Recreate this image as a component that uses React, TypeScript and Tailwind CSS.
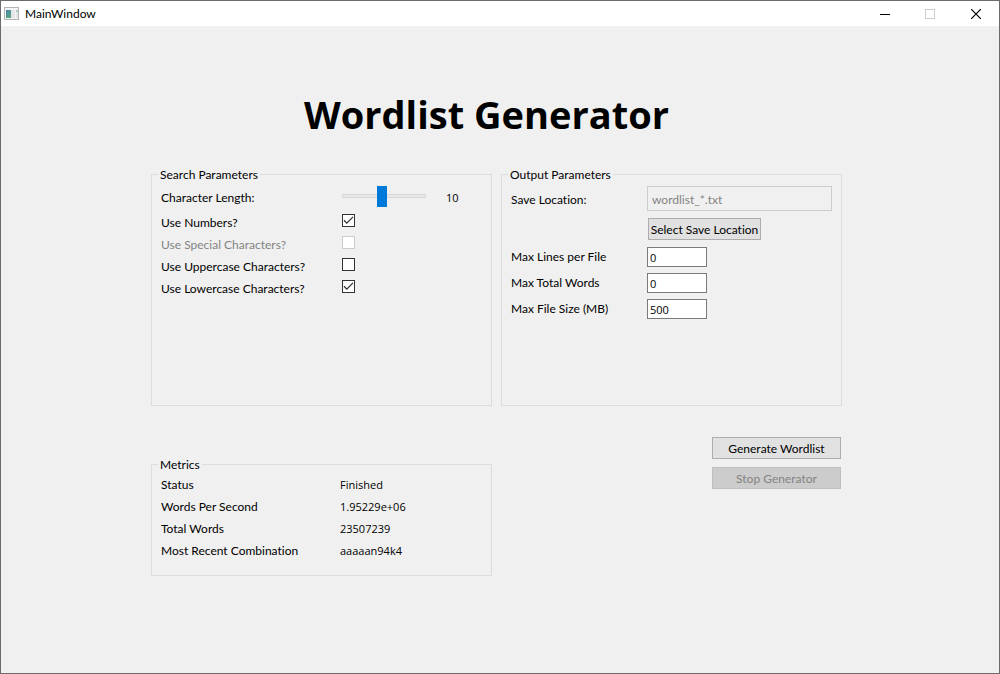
import { useState, type ReactNode } from "react";

function AppIcon() {
  return (
    <svg className="block" width="15" height="13" viewBox="0 0 15 13" aria-hidden="true" shapeRendering="crispEdges">
      <defs>
        <linearGradient id="pane" x1="0" y1="0" x2="0.6" y2="1">
          <stop offset="0" stopColor="#4a7fb0" />
          <stop offset="1" stopColor="#55a880" />
        </linearGradient>
      </defs>
      <rect x="0.5" y="0.5" width="14" height="12" fill="#f4f4f4" stroke="#b0b4b6" />
      <rect x="2" y="3" width="5" height="8" fill="url(#pane)" />
      <rect x="7" y="3" width="4" height="8" fill="#e3e5e7" />
      <rect x="12" y="3" width="2" height="2" fill="#a5cdbf" />
      <rect x="12" y="5" width="2" height="6" fill="#e3e7ea" />
    </svg>
  );
}

function TitleBar() {
  return (
    <header className="flex h-[25px] items-center bg-white pl-[3px]">
      <AppIcon />
      <span className="ml-[6px] grow">MainWindow</span>
      <div className="mr-px flex h-full">
        <button type="button" aria-label="Minimize" className="flex h-full w-[45px] items-center justify-center">
          <svg width="10" height="10" viewBox="0 0 10 10" shapeRendering="crispEdges">
            <path d="M0 5.5H10" stroke="#000" />
          </svg>
        </button>
        <button type="button" disabled aria-label="Maximize" className="flex h-full w-[45px] items-center justify-center">
          <svg width="10" height="10" viewBox="0 0 10 10" shapeRendering="crispEdges">
            <rect x="0.5" y="0.5" width="9" height="9" fill="none" stroke="#ccc" />
          </svg>
        </button>
      </div>
      <button type="button" aria-label="Close" className="flex h-full w-[46px] items-center justify-center">
        <svg width="10" height="10" viewBox="0 0 10 10">
          <path d="M0 0L10 10M10 0L0 10" stroke="#000" strokeWidth="1.2" />
        </svg>
      </button>
    </header>
  );
}

function Group({ title, children }: { title: string; children: ReactNode }) {
  return (
    <fieldset className="min-w-0 border border-[#dcdcdc] px-[9px]">
      <legend className="-ml-[3px] h-[17px] px-[2px] leading-[17px]">{title}</legend>
      {children}
    </fieldset>
  );
}

function CheckRow({ id, label, checked = false, disabled = false }: { id: string; label: string; checked?: boolean; disabled?: boolean }) {
  return (
    <div className="grid h-[22px] grid-cols-[181px_1fr]">
      <label htmlFor={id} className={disabled ? "leading-[22px] text-[#838383]" : "leading-[22px]"}>
        {label}
      </label>
      <span className="grid justify-items-start pt-[2px]">
        <input
          id={id}
          type="checkbox"
          defaultChecked={checked}
          disabled={disabled}
          className="peer col-start-1 row-start-1 size-[13px] appearance-none border border-[#333] bg-white disabled:border-[#ccc]"
        />
        <svg className="pointer-events-none invisible col-start-1 row-start-1 peer-checked:visible" width="13" height="13" viewBox="0 0 13 13">
          <path d="M2 6.3L4.8 9.1L11 2.9" fill="none" stroke="#333" strokeWidth="1.3" />
        </svg>
      </span>
    </div>
  );
}

function LimitRow({ id, label, value }: { id: string; label: string; value: string }) {
  return (
    <div className="grid grid-cols-[136px_60px] items-center">
      <label htmlFor={id}>{label}</label>
      <input
        id={id}
        type="text"
        defaultValue={value}
        className="h-5 w-full border border-[#7a7a7a] bg-white px-[2px] font-['Open_Sans','Noto_Sans',sans-serif] text-[11px]"
      />
    </div>
  );
}

const metrics = [
  ["Status", "Finished"],
  ["Words Per Second", "1.95229e+06"],
  ["Total Words", "23507239"],
  ["Most Recent Combination", "aaaaan94k4"],
];

export default function App() {
  const [length, setLength] = useState(10);

  return (
    <div className="flex min-h-screen flex-col border border-[#6b6b6b] bg-[#f0f0f0] font-['Lato','Open_Sans',sans-serif] text-[12px] leading-[16px] text-black [font-variant-ligatures:none]">
      <TitleBar />
      <main className="pt-[60px] pr-[157px] pb-10 pl-[150px]">
        <h1 className="pr-5 text-center font-['Open_Sans','Noto_Sans',sans-serif] text-[38px] leading-[56px] font-bold">Wordlist Generator</h1>

        <div className="mt-6 grid min-h-[240px] grid-cols-2 gap-[9px]">
          <Group title="Search Parameters">
            <div className="grid h-[29px] grid-cols-[181px_84px_1fr]">
              <label htmlFor="length" className="leading-[30px]">Character Length:</label>
              <input
                id="length"
                type="range"
                min={1}
                max={20}
                value={length}
                onChange={(e) => setLength(Number(e.target.value))}
                className="h-[25px] w-full appearance-none bg-transparent [&::-webkit-slider-runnable-track]:h-1 [&::-webkit-slider-runnable-track]:border [&::-webkit-slider-runnable-track]:border-[#d6d6d6] [&::-webkit-slider-runnable-track]:bg-[#e7eaea] [&::-webkit-slider-thumb]:-mt-[9px] [&::-webkit-slider-thumb]:h-[21px] [&::-webkit-slider-thumb]:w-[10px] [&::-webkit-slider-thumb]:appearance-none [&::-webkit-slider-thumb]:bg-[#007ad9]"
              />
              <output htmlFor="length" className="pl-5 font-['Open_Sans','Noto_Sans',sans-serif] text-[11px] leading-[30px]">{length}</output>
            </div>
            <CheckRow id="numbers" label="Use Numbers?" checked />
            <CheckRow id="special" label="Use Special Characters?" disabled />
            <CheckRow id="uppercase" label="Use Uppercase Characters?" />
            <CheckRow id="lowercase" label="Use Lowercase Characters?" checked />
          </Group>

          <Group title="Output Parameters">
            <div className="grid grid-cols-[136px_1fr] items-center pt-[3px]">
              <label htmlFor="location" className="pt-[2px]">Save Location:</label>
              <input
                id="location"
                type="text"
                disabled
                defaultValue="wordlist_*.txt"
                className="h-[25px] w-full border border-[#ccc] bg-[#f0f0f0] px-1 pt-[2px] text-[#838383]"
              />
            </div>
            <button type="button" className="mt-[7px] ml-[137px] block h-[22px] w-[113px] border border-[#adadad] bg-[#e1e1e1] pt-px whitespace-nowrap">
              Select Save Location
            </button>
            <div className="mt-[7px] flex flex-col gap-[6px]">
              <LimitRow id="lines" label="Max Lines per File" value="0" />
              <LimitRow id="words" label="Max Total Words" value="0" />
              <LimitRow id="size" label="Max File Size (MB)" value="500" />
            </div>
          </Group>
        </div>

        <div className="mt-[31px] grid grid-cols-2 gap-[9px]">
          <div className="grid min-h-[139px] pt-[19px]">
            <Group title="Metrics">
              <dl className="grid grid-cols-[179px_1fr] pt-px pb-[13px] leading-[22px]">
                {metrics.map(([name, value]) => (
                  <div key={name} className="contents">
                    <dt>{name}</dt>
                    <dd className="font-['Open_Sans','Noto_Sans',sans-serif] text-[11px]">{value}</dd>
                  </div>
                ))}
              </dl>
            </Group>
          </div>
          <div className="flex flex-col items-end gap-2 pr-px">
            <button type="button" className="h-[22px] w-[129px] border border-[#adadad] bg-[#e1e1e1] pt-px">
              Generate Wordlist
            </button>
            <button type="button" disabled className="h-[22px] w-[129px] border border-[#bfbfbf] bg-[#ccc] pt-px text-[#838383]">
              Stop Generator
            </button>
          </div>
        </div>
      </main>
    </div>
  );
}
